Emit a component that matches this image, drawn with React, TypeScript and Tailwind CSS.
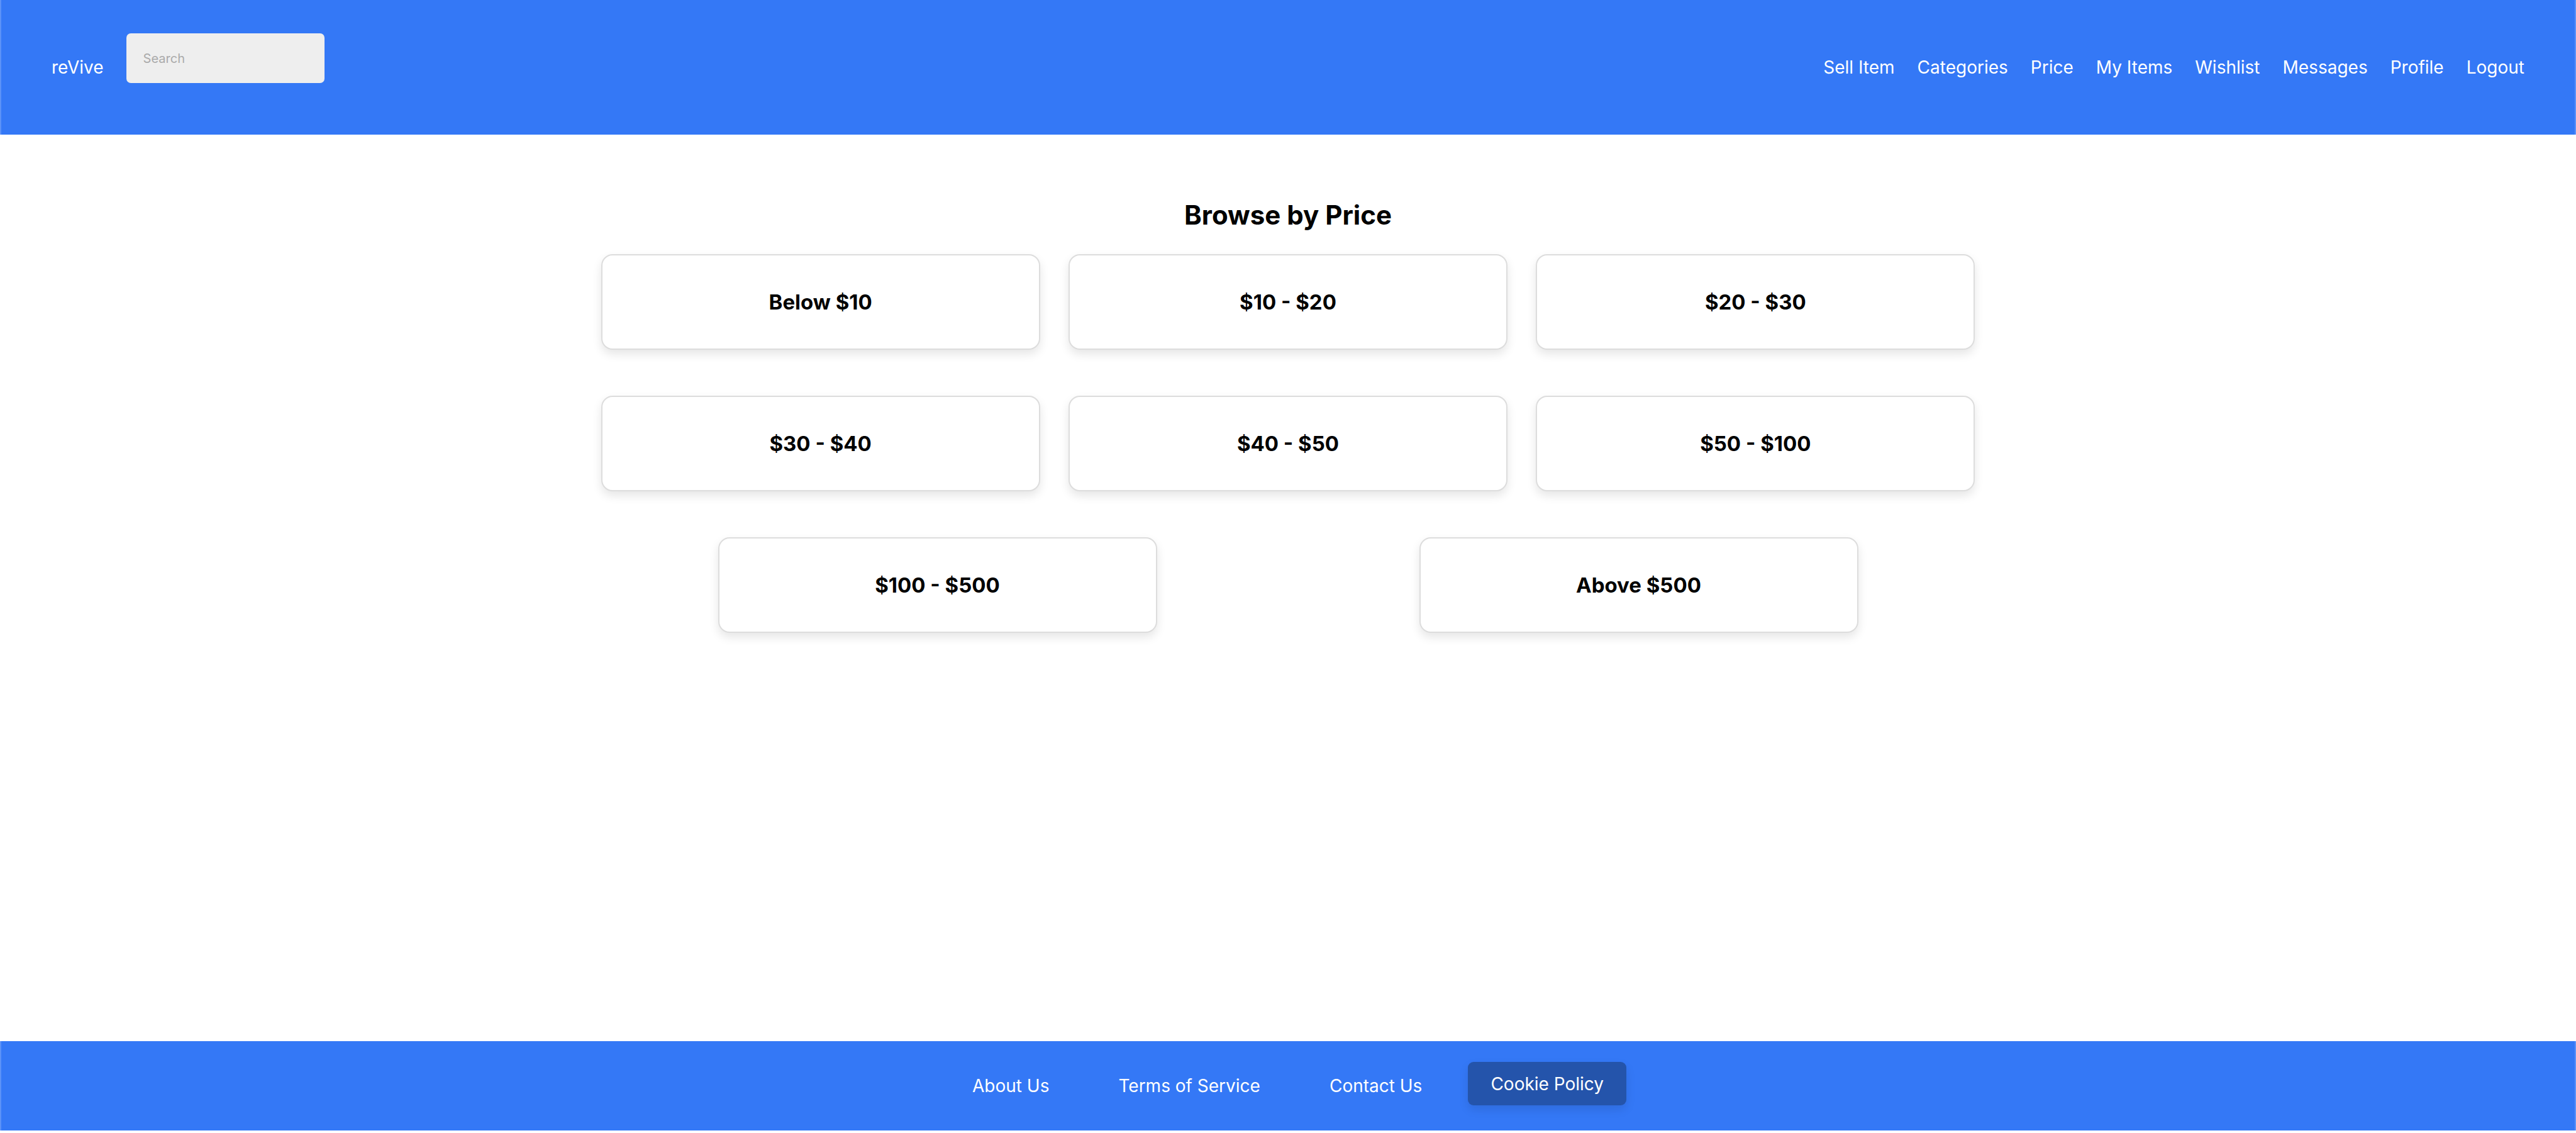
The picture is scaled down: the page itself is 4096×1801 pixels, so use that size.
const navLinks = ["Sell Item", "Categories", "Price", "My Items", "Wishlist", "Messages", "Profile", "Logout"];
const prices = [
  "Below $10",
  "$10 - $20",
  "$20 - $30",
  "$30 - $40",
  "$40 - $50",
  "$50 - $100",
  "$100 - $500",
  "Above $500",
];
const footerLinks = ["About Us", "Terms of Service", "Contact Us"];

function Header() {
  return (
    <header className="flex items-start justify-between border-x-2 border-[#5b92f8] bg-[#3478f6] px-20 pt-[53px] pb-[82px] text-white">
      <div className="flex items-start gap-9">
        <a href="#home" className="pt-9 text-[28px] leading-9">
          reVive
        </a>
        <input
          type="search"
          aria-label="Search"
          placeholder="Search"
          className="h-[79px] w-[315px] rounded-[7px] bg-[#eeeeee] px-[27px] text-[20px] text-black placeholder:text-[#aaaaaa]"
        />
      </div>
      <nav aria-label="Main">
        <ul className="flex gap-9 pt-9 text-[28px] leading-9">
          {navLinks.map((label) => (
            <li key={label}>
              <a href="#nav">{label}</a>
            </li>
          ))}
        </ul>
      </nav>
    </header>
  );
}

function PriceCard({ label }: { label: string }) {
  return (
    <li className="w-[698px]">
      <a
        href="#price"
        className="flex h-[152px] items-center justify-center rounded-[18px] border-2 border-[#dddddd] bg-white shadow-[0_7px_15px_rgba(0,0,0,0.1)]"
      >
        <h2 className="text-[33px] leading-10 font-bold">{label}</h2>
      </a>
    </li>
  );
}

function Footer() {
  return (
    <footer className="flex items-start justify-center border-x-2 border-[#5b92f8] bg-[#3478f6] pt-[33px] pb-10 pl-9 text-[28px] leading-9 text-white">
      <nav aria-label="Footer">
        <ul className="flex pt-5">
          {footerLinks.map((label) => (
            <li key={label} className="pr-[110px] last:pr-[73px]">
              <a href="#footer">{label}</a>
            </li>
          ))}
        </ul>
      </nav>
      <button
        type="button"
        className="h-[69px] rounded-[9px] bg-[#2454ab] px-9 shadow-[0_7px_15px_rgba(0,0,0,0.1)]"
      >
        Cookie Policy
      </button>
    </footer>
  );
}

export default function App() {
  return (
    <div className="flex min-h-screen flex-col bg-white pb-1 font-['Inter',sans-serif] text-black">
      <Header />
      <main className="flex-1 pt-[102px]">
        <h1 className="text-center text-[42px] leading-[52px] font-bold">Browse by Price</h1>
        <ul className="mx-auto mt-9 flex w-full max-w-[2230px] flex-wrap justify-around gap-y-[73px]">
          {prices.map((label) => (
            <PriceCard key={label} label={label} />
          ))}
        </ul>
      </main>
      <Footer />
    </div>
  );
}
